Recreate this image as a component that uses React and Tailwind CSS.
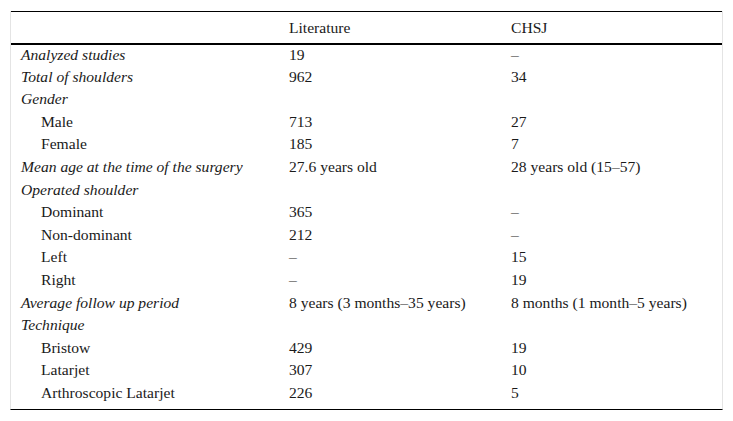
const rows = [
  { label: "Analyzed studies", lit: "19", chsj: "–", italic: true },
  { label: "Total of shoulders", lit: "962", chsj: "34", italic: true },
  { label: "Gender", lit: "", chsj: "", italic: true },
  { label: "Male", lit: "713", chsj: "27" },
  { label: "Female", lit: "185", chsj: "7" },
  { label: "Mean age at the time of the surgery", lit: "27.6 years old", chsj: "28 years old (15–57)", italic: true },
  { label: "Operated shoulder", lit: "", chsj: "", italic: true },
  { label: "Dominant", lit: "365", chsj: "–" },
  { label: "Non-dominant", lit: "212", chsj: "–" },
  { label: "Left", lit: "–", chsj: "15" },
  { label: "Right", lit: "–", chsj: "19" },
  { label: "Average follow up period", lit: "8 years (3 months–35 years)", chsj: "8 months (1 month–5 years)", italic: true },
  { label: "Technique", lit: "", chsj: "", italic: true },
  { label: "Bristow", lit: "429", chsj: "19" },
  { label: "Latarjet", lit: "307", chsj: "10" },
  { label: "Arthroscopic Latarjet", lit: "226", chsj: "5" },
];

export default function App() {
  return (
    <div className="w-[733px] h-[421px] bg-white pt-[11px] pl-[10px] font-[family-name:'Liberation_Serif',serif] text-[15.6px] text-[#1a1a1a]">
      <div className="w-[713px] border-x border-[#e4e4e4] border-b border-b-black pb-[4px]">
        <table className="w-full table-fixed border-collapse">
          <colgroup>
            <col className="w-[268px]" />
            <col className="w-[222px]" />
            <col />
          </colgroup>
          <thead>
            <tr className="h-[32px] border-t border-black border-b-2 border-b-black">
              <th className="font-normal text-left pl-[10px]"></th>
              <th className="font-normal text-left pl-[10px]">Literature</th>
              <th className="font-normal text-left pl-[10px]">CHSJ</th>
            </tr>
          </thead>
          <tbody>
            {rows.map((r) => (
              <tr key={r.label} className="h-[22.6px]">
                <td className={r.italic ? "italic pl-[10px] pb-[2px] leading-none" : "pl-[30px] pb-[2px] leading-none"}>{r.label}</td>
                <td className="pl-[10px] pb-[2px] leading-none">{r.lit}</td>
                <td className="pl-[10px] pb-[2px] leading-none">{r.chsj}</td>
              </tr>
            ))}
          </tbody>
        </table>
      </div>
    </div>
  );
}
